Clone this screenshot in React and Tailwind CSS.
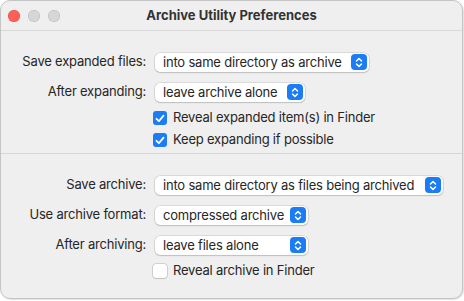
import React from 'react';

const Stepper = () => (
  <span className="flex h-[16px] w-[16px] items-center justify-center rounded-[4px] bg-[#1b7cf6]">
    <svg width="8" height="11" viewBox="0 0 8 11" fill="none">
      <path d="M1.5 4 L4 1.5 L6.5 4" stroke="white" strokeWidth="1.5" strokeLinecap="round" strokeLinejoin="round" />
      <path d="M1.5 7 L4 9.5 L6.5 7" stroke="white" strokeWidth="1.5" strokeLinecap="round" strokeLinejoin="round" />
    </svg>
  </span>
);

const Popup = ({ value, width }) => (
  <div
    className={`flex h-[19px] items-center justify-between rounded-[5px] bg-white pl-[8px] pr-[2px] shadow-[0_0_0_0.5px_rgba(0,0,0,0.18),0_1px_1.5px_rgba(0,0,0,0.12)] ${width}`}
  >
    <span className="leading-none">{value}</span>
    <Stepper />
  </div>
);

const Check = ({ checked, label }) => (
  <div className="col-start-2 flex h-[22px] items-center gap-[6px]">
    {checked ? (
      <span className="-ml-[2px] flex h-[14px] w-[14px] items-center justify-center rounded-[3px] bg-[#1b7cf6]">
        <svg width="10" height="9" viewBox="0 0 10 9" fill="none">
          <path d="M1.5 4.8 L3.9 7.2 L8.5 1.6" stroke="white" strokeWidth="1.8" strokeLinecap="round" strokeLinejoin="round" />
        </svg>
      </span>
    ) : (
      <span className="-ml-[2px] h-[14px] w-[14px] rounded-[3px] bg-white shadow-[0_0_0_0.5px_rgba(0,0,0,0.25),0_1px_1px_rgba(0,0,0,0.08)]" />
    )}
    <span>{label}</span>
  </div>
);

const Row = ({ label, children }) => (
  <>
    <div className="flex h-[20px] items-center justify-end">{label}</div>
    <div className="flex h-[20px] items-center">{children}</div>
  </>
);

export default function App() {
  return (
    <div className="h-[301px] w-[464px] bg-white font-['Inter',sans-serif] text-[13px] tracking-[-0.2px] text-[#262626]">
      <div className="flex h-[299px] w-[463px] flex-col overflow-hidden rounded-[10px] border border-[#c4c4c4] bg-[#efefef] shadow-[1px_1px_1px_rgba(0,0,0,0.12)]">
        <div className="relative flex h-[30px] shrink-0 items-center justify-center border-b border-[#d9d9d9]">
          <div className="absolute left-[7px] top-[9px] flex gap-[8px]">
            <span className="h-[12px] w-[12px] rounded-full bg-[#fe5f57] shadow-[inset_0_0_0_0.5px_rgba(200,40,40,0.5)]" />
            <span className="h-[12px] w-[12px] rounded-full bg-[#d6d6d6] shadow-[inset_0_0_0_0.5px_rgba(0,0,0,0.15)]" />
            <span className="h-[12px] w-[12px] rounded-full bg-[#d6d6d6] shadow-[inset_0_0_0_0.5px_rgba(0,0,0,0.15)]" />
          </div>
          <span className="font-bold text-[13px] tracking-normal text-[#333]">Archive Utility Preferences</span>
        </div>

        <div className="grid grid-cols-[145px_1fr] gap-x-[9px] pb-[2px] pt-[21px]">
          <Row label="Save expanded files:">
            <Popup value="into same directory as archive" width="w-[214px]" />
          </Row>
          <div className="col-span-2 h-[10px]" />
          <Row label="After expanding:">
            <Popup value="leave archive alone" width="w-[150px]" />
          </Row>
          <div className="col-span-2 h-[5px]" />
          <Check checked label="Reveal expanded item(s) in Finder" />
          <Check checked label="Keep expanding if possible" />
        </div>

        <div className="h-px shrink-0 bg-[#d6d6d6]" />

        <div className="grid grid-cols-[145px_1fr] gap-x-[9px] pt-[21px]">
          <Row label="Save archive:">
            <Popup value="into same directory as files being archived" width="w-[288px]" />
          </Row>
          <div className="col-span-2 h-[10px]" />
          <Row label="Use archive format:">
            <Popup value="compressed archive" width="w-[153px]" />
          </Row>
          <div className="col-span-2 h-[10px]" />
          <Row label="After archiving:">
            <Popup value="leave files alone" width="w-[153px]" />
          </Row>
          <div className="col-span-2 h-[5px]" />
          <Check label="Reveal archive in Finder" />
        </div>
      </div>
    </div>
  );
}
